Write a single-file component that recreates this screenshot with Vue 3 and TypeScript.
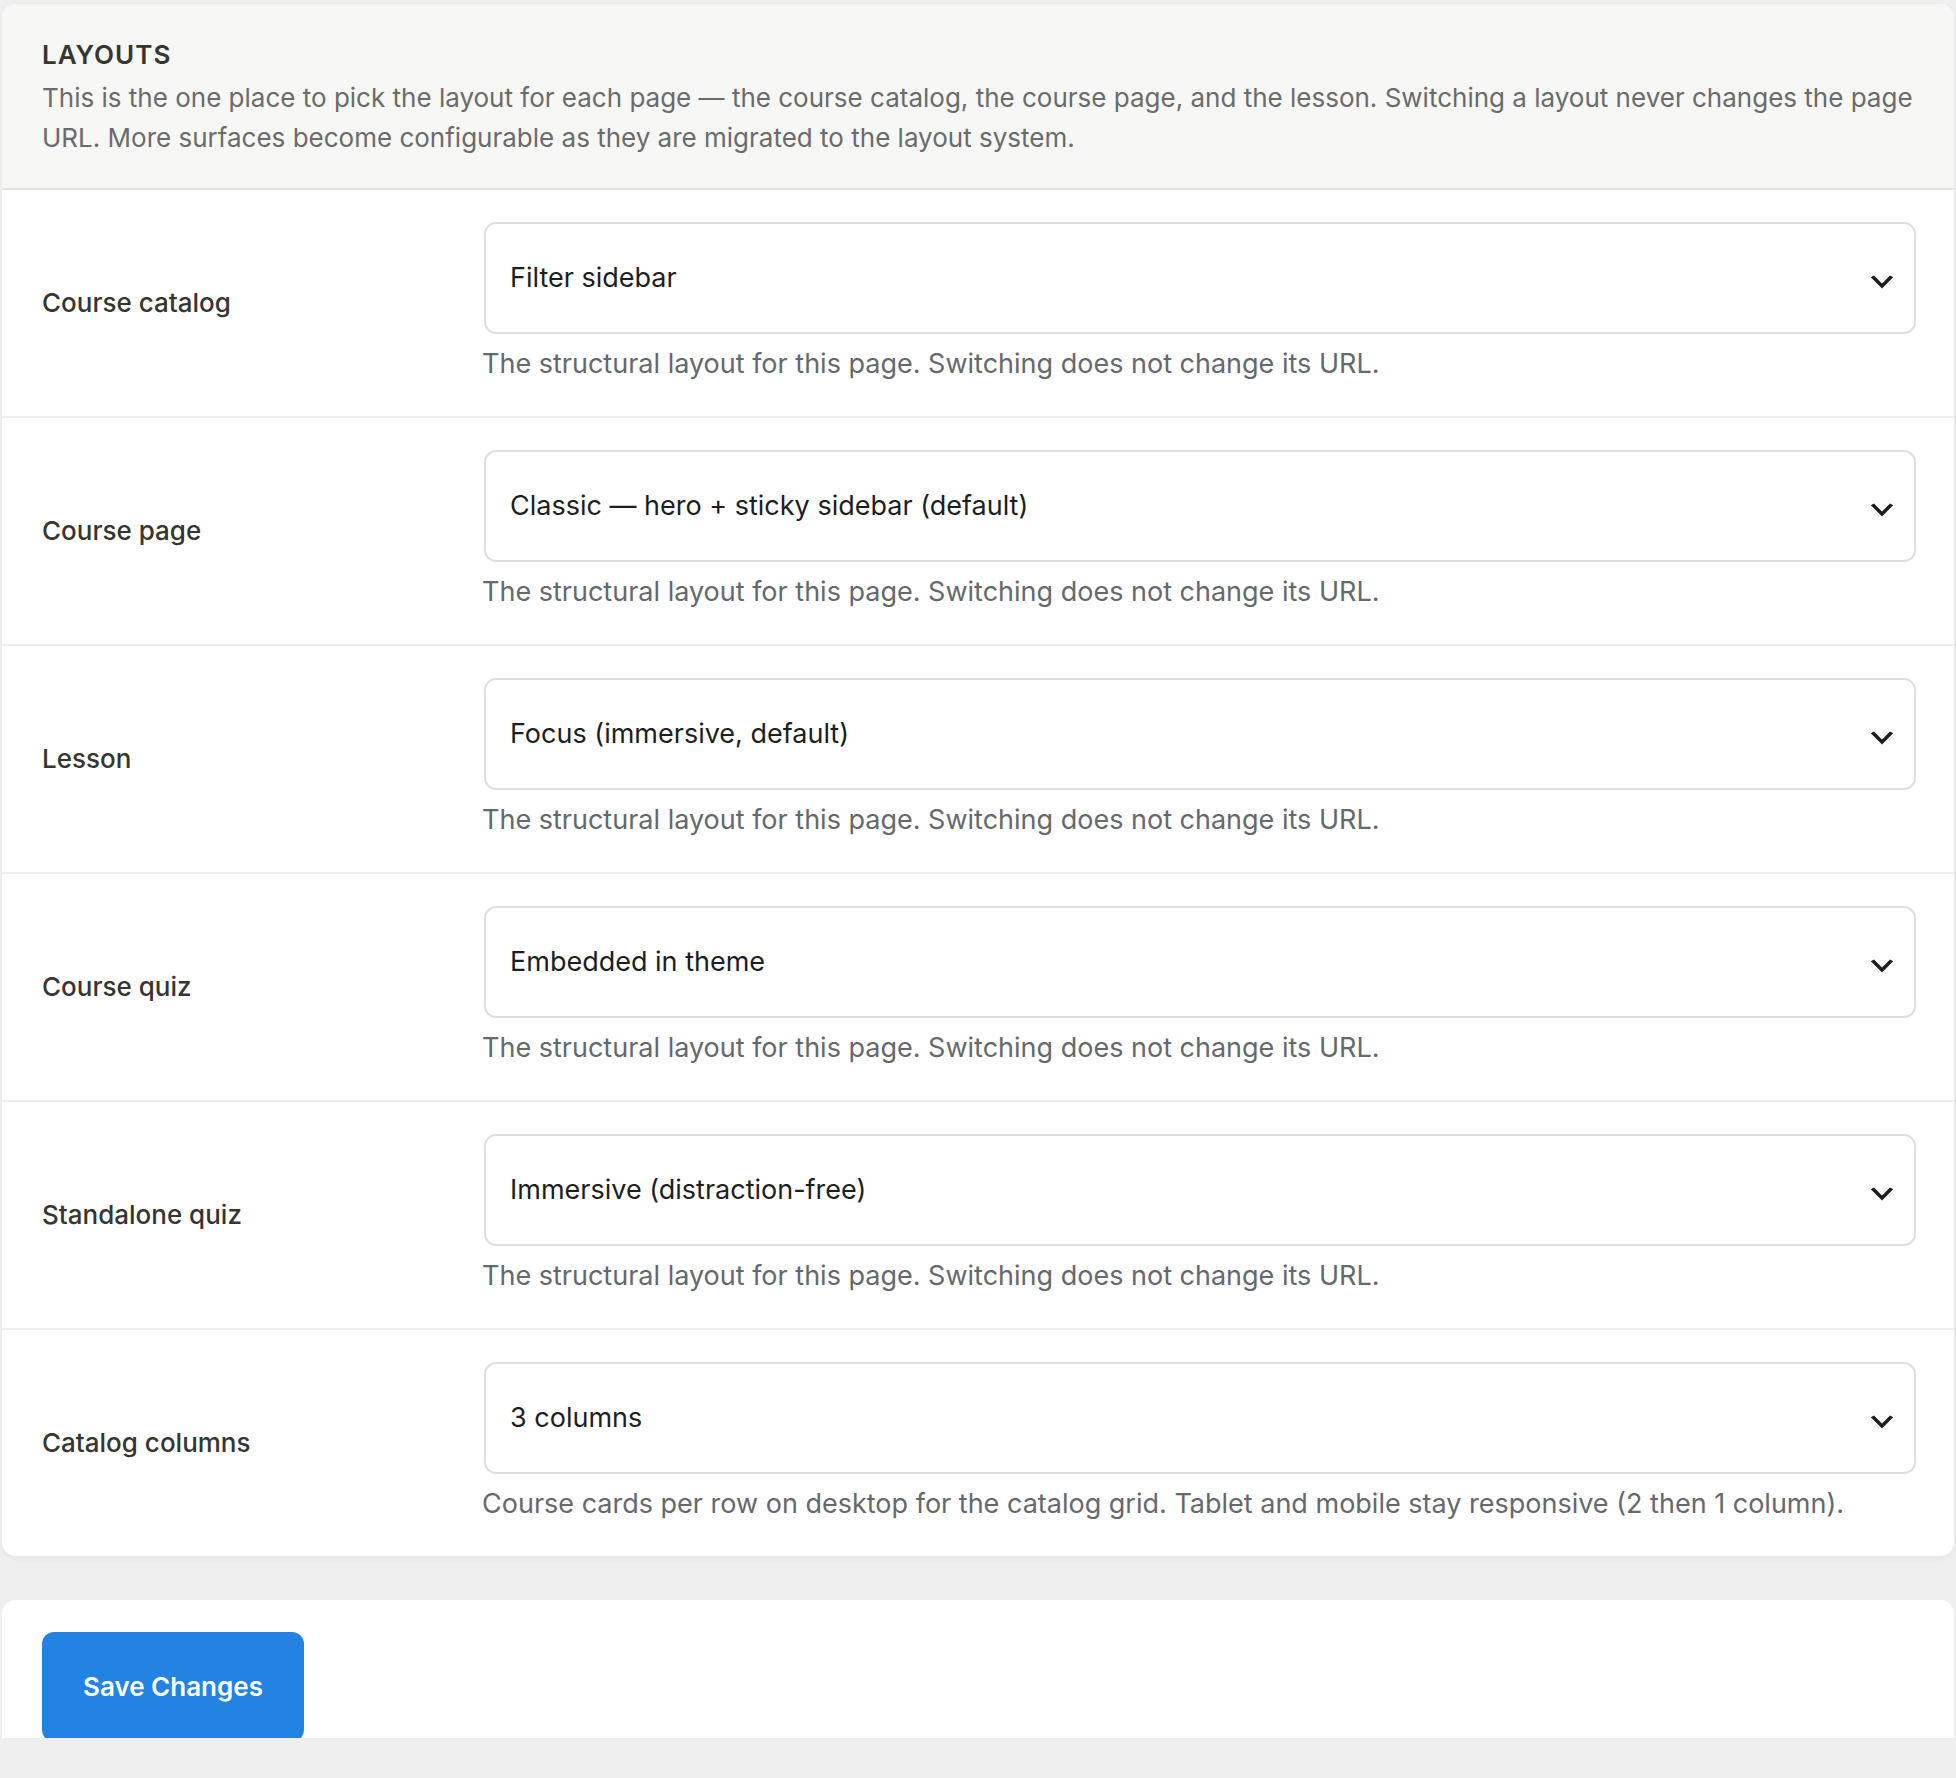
<script setup lang="ts">
import { reactive } from 'vue'

interface LayoutField {
  id: string
  label: string
  value: string
  options: string[]
  help: string
}

const layoutHelp = 'The structural layout for this page. Switching does not change its URL.'

const fields = reactive<LayoutField[]>([
  {
    id: 'course-catalog',
    label: 'Course catalog',
    value: 'Filter sidebar',
    options: ['Filter sidebar'],
    help: layoutHelp,
  },
  {
    id: 'course-page',
    label: 'Course page',
    value: 'Classic — hero + sticky sidebar (default)',
    options: ['Classic — hero + sticky sidebar (default)'],
    help: layoutHelp,
  },
  {
    id: 'lesson',
    label: 'Lesson',
    value: 'Focus (immersive, default)',
    options: ['Focus (immersive, default)'],
    help: layoutHelp,
  },
  {
    id: 'course-quiz',
    label: 'Course quiz',
    value: 'Embedded in theme',
    options: ['Embedded in theme'],
    help: layoutHelp,
  },
  {
    id: 'standalone-quiz',
    label: 'Standalone quiz',
    value: 'Immersive (distraction-free)',
    options: ['Immersive (distraction-free)'],
    help: layoutHelp,
  },
  {
    id: 'catalog-columns',
    label: 'Catalog columns',
    value: '3 columns',
    options: ['3 columns'],
    help: 'Course cards per row on desktop for the catalog grid. Tablet and mobile stay responsive (2 then 1 column).',
  },
])
</script>

<template>
  <form class="settings" @submit.prevent>
    <section class="card" aria-labelledby="layouts-title">
      <header class="card-header">
        <h2 id="layouts-title" class="title">Layouts</h2>
        <p class="intro">
          This is the one place to pick the layout for each page — the course catalog, the course
          page, and the lesson. Switching a layout never changes the page URL. More surfaces become
          configurable as they are migrated to the layout system.
        </p>
      </header>

      <div v-for="field in fields" :key="field.id" class="row">
        <label class="label" :for="field.id">{{ field.label }}</label>
        <div class="control">
          <div class="select-wrap">
            <select
              :id="field.id"
              v-model="field.value"
              class="select"
              :aria-describedby="`${field.id}-help`"
            >
              <option v-for="option in field.options" :key="option" :value="option">
                {{ option }}
              </option>
            </select>
            <svg class="chevron" viewBox="0 0 20 20" aria-hidden="true">
              <path d="M5 6l5 5 5-5 2 1-7 7-7-7 2-1z" fill="currentColor" />
            </svg>
          </div>
          <p :id="`${field.id}-help`" class="help">{{ field.help }}</p>
        </div>
      </div>
    </section>

    <div class="save-bar">
      <button type="submit" class="save">Save Changes</button>
    </div>
  </form>
</template>

<style>
body {
  margin: 0;
  background: #efefef;
}
</style>

<style scoped>
.settings {
  display: flex;
  flex-direction: column;
  gap: 44px;
  padding: 4px 2px 40px;
  font-family: Inter, 'Liberation Sans', sans-serif;
  font-size: 26px;
  line-height: 40px;
}

.card {
  overflow: hidden;
  border-radius: 14px;
  background: #fff;
  box-shadow: 0 2px 6px rgba(0, 0, 0, 0.04);
}

.card-header {
  padding: 32px 40px 30px;
  border-bottom: 2px solid #e3e3e1;
  background: #f7f7f5;
}

.title {
  margin: 0 0 4px;
  color: #37352f;
  font-size: 26px;
  font-weight: 600;
  line-height: 38px;
  letter-spacing: 1px;
  text-transform: uppercase;
}

.intro {
  margin: 0;
  color: #6b6b6b;
}

.row {
  display: grid;
  grid-template-columns: 440px minmax(0, 1fr);
  align-items: center;
  padding: 32px 40px;
}

.row:not(:last-child) {
  border-bottom: 2px solid #eeeeee;
}

.label {
  color: #37352f;
  font-weight: 500;
}

.control {
  display: flex;
  flex-direction: column;
  gap: 10px;
  font-size: 27px;
}

.select-wrap {
  position: relative;
  width: 100%;
  margin-left: 2px;
}

.select {
  display: block;
  box-sizing: border-box;
  width: 100%;
  height: 112px;
  padding: 0 60px 0 24px;
  border: 2px solid #dfdfdf;
  border-radius: 12px;
  background: #fff;
  color: #1e1e1e;
  font: inherit;
  appearance: none;
}

.chevron {
  position: absolute;
  top: 44px;
  right: 18px;
  width: 32px;
  height: 32px;
  color: #1e1e1e;
  pointer-events: none;
}

.help {
  margin: 0;
  color: #66696c;
}

/* The bar is shorter than its button, so the button's lower edge is cut off. */
.save-bar {
  display: flex;
  align-items: flex-start;
  height: 106px;
  padding: 32px 40px 0;
  overflow: hidden;
  border-radius: 14px 14px 0 0;
  background: #fff;
}

.save {
  flex: none;
  height: 110px;
  padding: 0 41px;
  border: 0;
  border-radius: 12px;
  background: #2383e2;
  color: #fff;
  font: inherit;
  font-weight: 600;
}
</style>
